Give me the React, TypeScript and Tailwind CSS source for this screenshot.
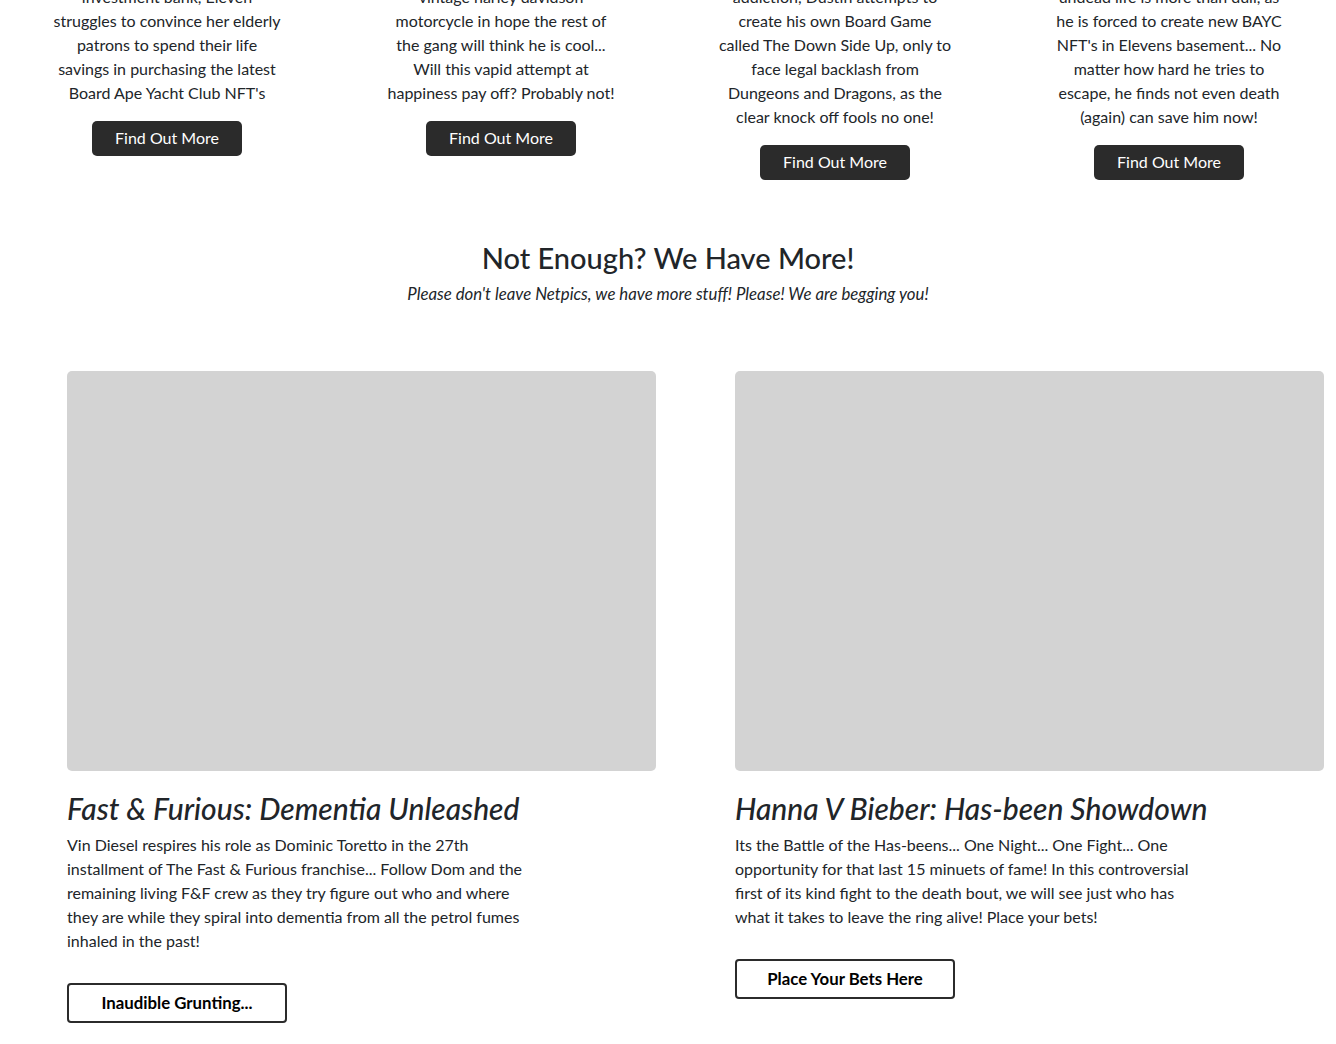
import React from "react";

const font = { fontFamily: "Lato, 'Noto Sans', sans-serif" };

const cols: string[][] = [
  [
    "investment bank, Eleven",
    "struggles to convince her elderly",
    "patrons to spend their life",
    "savings in purchasing the latest",
    "Board Ape Yacht Club NFT's",
  ],
  [
    "vintage harley davidson",
    "motorcycle in hope the rest of",
    "the gang will think he is cool...",
    "Will this vapid attempt at",
    "happiness pay off? Probably not!",
  ],
  [
    "addiction, Dustin attempts to",
    "create his own Board Game",
    "called The Down Side Up, only to",
    "face legal backlash from",
    "Dungeons and Dragons, as the",
    "clear knock off fools no one!",
  ],
  [
    "undead life is more than dull, as",
    "he is forced to create new BAYC",
    "NFT's in Elevens basement... No",
    "matter how hard he tries to",
    "escape, he finds not even death",
    "(again) can save him now!",
  ],
];

const cards = [
  {
    title: "Fast & Furious: Dementia Unleashed",
    lines: [
      "Vin Diesel respires his role as Dominic Toretto in the 27th",
      "installment of The Fast & Furious franchise... Follow Dom and the",
      "remaining living F&F crew as they try figure out who and where",
      "they are while they spiral into dementia from all the petrol fumes",
      "inhaled in the past!",
    ],
    button: "Inaudible Grunting...",
  },
  {
    title: "Hanna V Bieber: Has-been Showdown",
    lines: [
      "Its the Battle of the Has-beens... One Night... One Fight... One",
      "opportunity for that last 15 minuets of fame! In this controversial",
      "first of its kind fight to the death bout, we will see just who has",
      "what it takes to leave the ring alive! Place your bets!",
    ],
    button: "Place Your Bets Here",
  },
];

export default function App() {
  return (
    <div className="w-[1336px] h-[1044px] overflow-hidden bg-white text-[#212529]" style={font}>
      <div className="grid grid-cols-4 -mt-[15px]">
        {cols.map((c, i) => (
          <div key={i} className="flex flex-col items-center text-center">
            <div className="text-[16px] leading-[24px] whitespace-nowrap">
              {c.map((l, j) => (
                <div key={j}>{l}</div>
              ))}
            </div>
            <div className="mt-4 w-[150px] h-[35px] rounded-[5px] bg-[#2b2b2b] text-white text-[16px] leading-[24px] pb-[1px] flex items-center justify-center">
              Find Out More
            </div>
          </div>
        ))}
      </div>

      <div className="mt-[61px] text-center">
        <h2 className="text-[29px] leading-[34px] font-medium text-[#212529]">Not Enough? We Have More!</h2>
        <p className="mt-[7px] text-[16.8px] leading-[24px] italic">
          Please don't leave Netpics, we have more stuff! Please! We are begging you!
        </p>
      </div>

      <div className="grid grid-cols-2 mt-[65px]">
        {cards.map((card, i) => (
          <div key={i} className="pl-[67px] pr-[12px]">
            <div className="h-[400px] rounded-[5px] bg-[#d3d3d3]" />
            <h3 className="mt-[19px] text-[30px] leading-[36px] italic font-medium whitespace-nowrap">{card.title}</h3>
            <div className="mt-[7px] text-[16px] leading-[24px] whitespace-nowrap">
              {card.lines.map((l, j) => (
                <div key={j}>{l}</div>
              ))}
            </div>
            <div className="mt-[30px] w-[220px] h-[40px] rounded-[4px] border-2 border-[#2b2b2b] flex items-center justify-center text-[16.8px] font-bold text-black">
              {card.button}
            </div>
          </div>
        ))}
      </div>
    </div>
  );
}
